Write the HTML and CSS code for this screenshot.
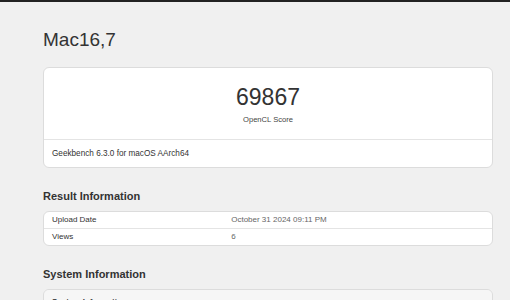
FILE: index.html
```html
<!DOCTYPE html>
<html lang="en">
<head>
<meta charset="utf-8">
<title>Mac16,7 - Geekbench</title>
<link rel="stylesheet" href="styles.css">
</head>
<body>
<div class="topbar"></div>
<main class="container">
  <h1 class="page-title">Mac16,7</h1>

  <section class="card">
    <div class="score-body">
      <div class="score">69867</div>
      <div class="score-label">OpenCL Score</div>
    </div>
    <div class="card-footer">Geekbench 6.3.0 for macOS AArch64</div>
  </section>

  <h2 class="section-title">Result Information</h2>
  <section class="card table">
    <div class="row">
      <div class="name">Upload Date</div>
      <div class="value">October 31 2024 09:11 PM</div>
    </div>
    <div class="row">
      <div class="name">Views</div>
      <div class="value">6</div>
    </div>
  </section>

  <h2 class="section-title">System Information</h2>
  <section class="card table">
    <div class="row head">
      <div class="name">System Information</div>
    </div>
  </section>
</main>
</body>
</html>
```

FILE: styles.css
```css
html, body {
  margin: 0;
  padding: 0;
}

body {
  background: #f0f0f0;
  color: #333;
  font-family: "Liberation Sans", Arial, sans-serif;
}

.topbar {
  height: 2px;
  background: #222;
}

.container {
  margin: 0 17px 0 43px;
}

.page-title {
  margin: 26px 0 15px;
  font-size: 19px;
  line-height: 24px;
  font-weight: normal;
  color: #333;
}

.card {
  background: #fff;
  border: 1px solid #dcdcdc;
  border-radius: 6px;
  overflow: hidden;
}

.score-body {
  padding: 15px 0 13px;
  text-align: center;
}

.score {
  font-size: 23px;
  line-height: 28px;
  color: #333;
}

.score-label {
  margin-top: 3px;
  font-size: 7.6px;
  line-height: 12px;
  color: #444;
}

.card-footer {
  border-top: 1px solid #e4e4e4;
  padding: 8px 8px 7px;
  font-size: 8.2px;
  line-height: 12px;
  color: #333;
}

.section-title {
  margin: 21px 0 8px;
  font-size: 11px;
  line-height: 14px;
  font-weight: bold;
  color: #333;
}

.table .row {
  display: grid;
  grid-template-columns: 40% 60%;
  align-items: center;
  height: 16px;
  font-size: 8px;
  line-height: 12px;
}

.table .row + .row {
  border-top: 1px solid #e4e4e4;
}

.table .name {
  padding-left: 8px;
  color: #333;
}

.table .value {
  padding-left: 8px;
  color: #666;
}

.table .row.head {
  background: #f6f6f6;
  height: 24px;
  font-weight: bold;
}
```
